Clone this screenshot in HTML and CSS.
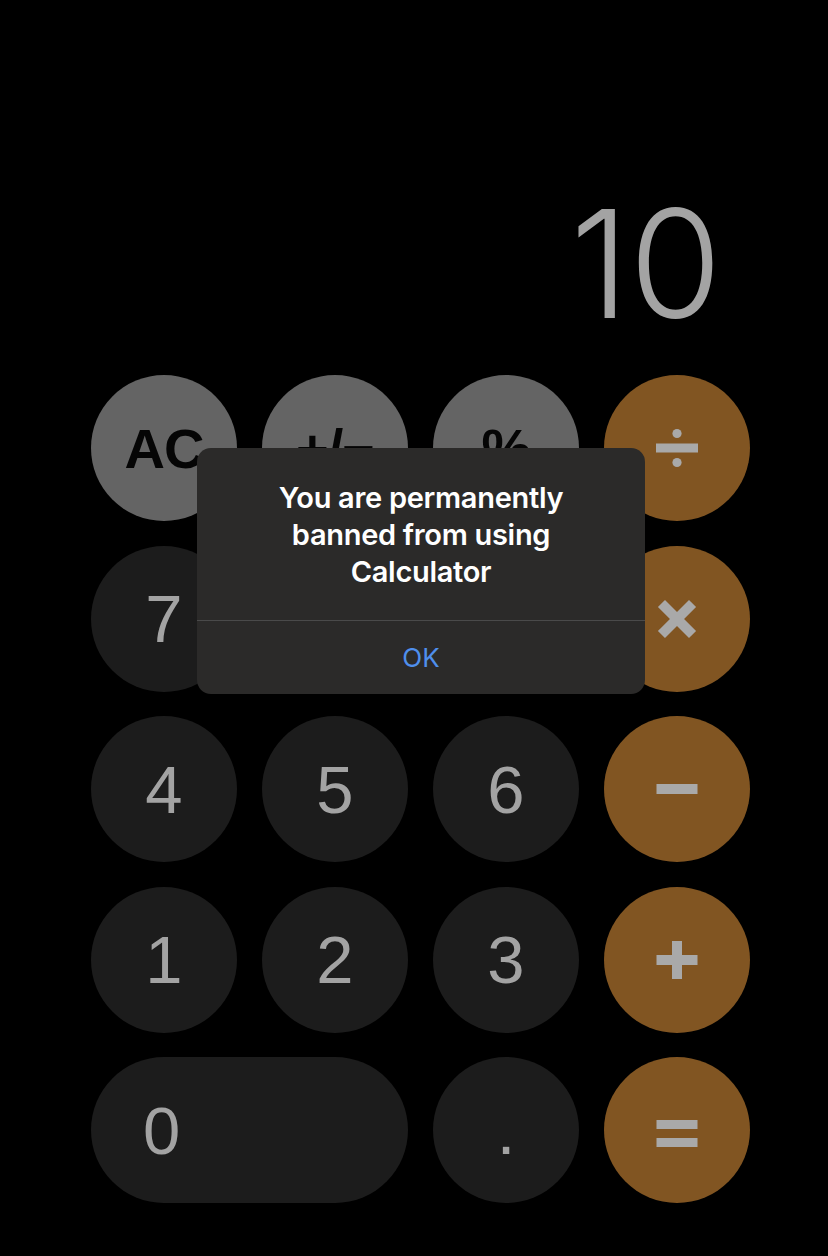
FILE: index.html
```html
<!DOCTYPE html>
<html>
<head>
<meta charset="utf-8">
<link rel="stylesheet" href="styles.css">
</head>
<body>
<div class="screen">
  <div class="display"><span class="result">10</span></div>
  <div class="keypad">
    <div class="key fn"><span class="fn-label">AC</span></div>
    <div class="key fn"><span class="fn-label">+/−</span></div>
    <div class="key fn"><span class="fn-label">%</span></div>
    <div class="key op">
      <svg width="48" height="48" viewBox="0 0 48 48"><rect x="3" y="19.5" width="42" height="9" fill="#a9a9a9"/><circle cx="24" cy="9.5" r="4.6" fill="#a9a9a9"/><circle cx="24" cy="38.5" r="4.6" fill="#a9a9a9"/></svg>
    </div>

    <div class="key num">7</div>
    <div class="key num">8</div>
    <div class="key num">9</div>
    <div class="key op">
      <svg width="48" height="48" viewBox="0 0 48 48"><g transform="rotate(45 24 24)"><rect x="2" y="19" width="44" height="10" fill="#a9a9a9"/><rect x="19" y="2" width="10" height="44" fill="#a9a9a9"/></g></svg>
    </div>

    <div class="key num">4</div>
    <div class="key num">5</div>
    <div class="key num">6</div>
    <div class="key op">
      <svg width="48" height="48" viewBox="0 0 48 48"><rect x="3.5" y="19" width="41" height="10" fill="#a9a9a9"/></svg>
    </div>

    <div class="key num">1</div>
    <div class="key num">2</div>
    <div class="key num">3</div>
    <div class="key op">
      <svg width="48" height="48" viewBox="0 0 48 48"><rect x="3.5" y="19" width="41" height="10" fill="#a9a9a9"/><rect x="19" y="5" width="10" height="38" fill="#a9a9a9"/></svg>
    </div>

    <div class="key num zero">0</div>
    <div class="key num">.</div>
    <div class="key op">
      <svg width="48" height="48" viewBox="0 0 48 48"><rect x="3.5" y="14" width="41" height="9" fill="#a9a9a9"/><rect x="3.5" y="32" width="41" height="9" fill="#a9a9a9"/></svg>
    </div>
  </div>

  <div class="alert">
    <div class="alert-title">You are permanently banned from using Calculator</div>
    <div class="alert-action">OK</div>
  </div>
</div>
</body>
</html>
```

FILE: styles.css
```css
html, body {
  margin: 0;
  padding: 0;
  background: #000;
}

.screen {
  position: relative;
  width: 828px;
  height: 1256px;
  background: #000;
  overflow: hidden;
}

.display {
  height: 375px;
  box-sizing: border-box;
  display: flex;
  justify-content: flex-end;
  align-items: flex-end;
  padding-right: 106px;
  padding-bottom: 36px;
}

.result {
  font-family: "Inter", "Helvetica Neue", sans-serif;
  font-weight: 300;
  font-size: 150px;
  line-height: 1;
  color: #a3a3a3;
  letter-spacing: 0;
}

.keypad {
  display: grid;
  grid-template-columns: repeat(4, 146px);
  grid-auto-rows: 146px;
  column-gap: 25px;
  row-gap: 24.5px;
  padding-left: 91px;
}

.key {
  width: 146px;
  height: 146px;
  border-radius: 73px;
  display: flex;
  align-items: center;
  justify-content: center;
  font-family: "Liberation Sans", Arial, sans-serif;
}

.num {
  background: #1c1c1c;
  color: #a3a3a3;
  font-size: 67px;
}

.fn {
  background: #646464;
  color: #050505;
  font-weight: 700;
  font-size: 56px;
}

.fn-label {
  letter-spacing: -1px;
}

.op {
  background: #815522;
}

.zero {
  grid-column: span 2;
  width: auto;
  justify-content: flex-start;
  padding-left: 52px;
}

.alert {
  position: absolute;
  left: 197px;
  top: 448px;
  width: 448px;
  height: 246px;
  border-radius: 14px;
  background: #2b2a29;
  display: flex;
  flex-direction: column;
  font-family: "Inter", "Helvetica Neue", sans-serif;
}

.alert-title {
  height: 173px;
  box-sizing: border-box;
  padding: 31px 50px 0;
  border-bottom: 1px solid #4a4a4a;
  color: #ffffff;
  font-weight: 600;
  font-size: 29px;
  line-height: 37px;
  letter-spacing: -0.3px;
  text-align: center;
}

.alert-action {
  flex: 1;
  display: flex;
  align-items: center;
  justify-content: center;
  color: #4f8fec;
  font-size: 26px;
  font-weight: 400;
}
```
